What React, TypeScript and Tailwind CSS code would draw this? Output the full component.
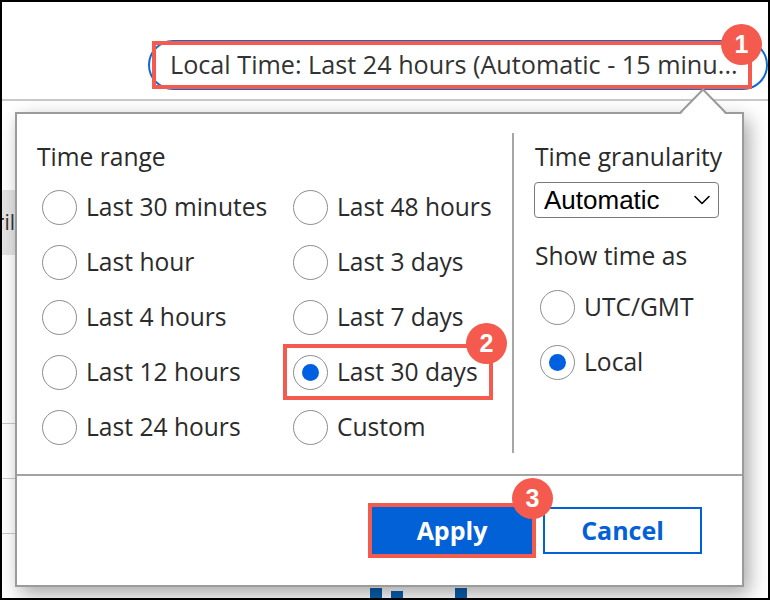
import { ChevronDown } from 'lucide-react'

const leftOptions = ['Last 30 minutes', 'Last hour', 'Last 4 hours', 'Last 12 hours', 'Last 24 hours']
const rightOptions = ['Last 48 hours', 'Last 3 days', 'Last 7 days', 'Last 30 days', 'Custom']

function Badge({ n, className }: { n: number; className: string }) {
  return (
    <span
      className={`absolute flex size-[41px] items-center justify-center rounded-full bg-[#f45b4e] font-['Liberation_Sans',Arial,sans-serif] text-[25px] font-bold text-white ${className}`}
    >
      {n}
    </span>
  )
}

function Radio({ label, checked, marked }: { label: string; checked?: boolean; marked?: boolean }) {
  return (
    <label
      className={`relative flex h-[48px] items-center gap-[9px] pl-[6px] ${marked ? 'w-[202px] outline-4 outline-[#f45b4e]' : 'w-fit pr-[7px]'}`}
    >
      <span className="flex size-[35px] shrink-0 items-center justify-center rounded-full border-[1.5px] border-[#8d8d8d] bg-white">
        {checked && <span className="size-[17px] rounded-full bg-[#0060df]" />}
      </span>
      <span className="whitespace-nowrap text-[24.6px] leading-none text-[#2b2b2b]">{label}</span>
      {marked && <Badge n={2} className="right-[-18px] top-[-25px]" />}
    </label>
  )
}

export default function App() {
  return (
    <div className="relative h-[600px] w-[770px] overflow-hidden border-2 border-black bg-white font-['Open_Sans','Noto_Sans',sans-serif]">
      {/* header with the time picker pill */}
      <div className="h-[99px] border-b-2 border-[#c9c9c9] pl-[146px] pt-[38px]">
        <button className="flex h-[50px] w-[620px] items-center rounded-full border-2 border-[#0a6cd0] pl-[6px]">
          <span className="relative flex h-[40px] w-[592px] items-center whitespace-nowrap pl-[14px] text-[25.2px] leading-none text-[#333] outline-4 outline-[#f45b4e]">
            Local Time: Last 24 hours (Automatic - 15 minu...
            <Badge n={1} className="left-[565px] top-[-21px]" />
          </span>
        </button>
      </div>

      {/* page behind the flyout */}
      <div className="flex h-[497px]">
        <div className="flex w-[13px] flex-col">
          <div className="mt-[89px] flex h-[65px] items-center justify-end overflow-hidden bg-[#e4e4e4] text-[21px] text-[#333]">
            April
          </div>
          <div className="mt-[168px] h-[55px] border-t border-[#c8c8c8]" />
          <div className="h-[55px] border-t border-[#c8c8c8]" />
          <div className="h-[55px] border-t border-[#c8c8c8]" />
        </div>
        <div className="flex flex-1 items-end pl-[355px]">
          <div className="h-[10px] w-[12px] bg-[#0a5fae]" />
          <div className="ml-[9px] h-[7px] w-[12px] bg-[#0a5fae]" />
          <div className="ml-[52px] h-[10px] w-[12px] bg-[#0a5fae]" />
        </div>
      </div>

      {/* flyout */}
      <div className="absolute left-[13px] top-[110px] flex h-[475px] w-[729px] flex-col border-2 border-[#9b9b9b] bg-white shadow-[5px_7px_18px_rgba(0,0,0,0.35)]">
        <svg className="absolute left-[663px] top-[-26px]" width="46" height="27" viewBox="0 0 46 27">
          <polygon points="0,27 23,1 46,27" fill="white" />
          <polyline points="0,25 23,1.5 46,25" fill="none" stroke="#9b9b9b" strokeWidth="2" />
        </svg>

        <div className="flex h-[362px] border-b-2 border-[#a3a3a3]">
          <div className="w-[495px] pl-[19px] pt-[28px]">
            <div className="ml-[1px] text-[24.6px] leading-[30px] text-[#2b2b2b]">Time range</div>
            <div className="mt-[11px] grid grid-cols-[251px_auto]">
              <div className="flex flex-col gap-[7px]">
                {leftOptions.map(o => (
                  <Radio key={o} label={o} />
                ))}
              </div>
              <div className="flex flex-col gap-[7px]">
                {rightOptions.map(o => (
                  <Radio key={o} label={o} checked={o === 'Last 30 days'} marked={o === 'Last 30 days'} />
                ))}
              </div>
            </div>
          </div>

          <div className="mb-[21px] mt-[19px] w-[2px] bg-[#a6a6a6]" />

          <div className="flex-1 pl-[20px] pt-[28px]">
            <div className="ml-[1px] whitespace-nowrap text-[24.6px] leading-[30px] text-[#2b2b2b]">Time granularity</div>
            <div className="mt-[10px] flex h-[36px] w-[185px] items-center justify-between rounded-[4px] border-[1.5px] border-[#7a7a7a] pl-[9px] pr-[2px] font-['Liberation_Sans',Arial,sans-serif] text-[26px] text-black">
              Automatic
              <ChevronDown size={28} strokeWidth={1.4} />
            </div>
            <div className="ml-[1px] mt-[23px] text-[24.6px] leading-[30px] text-[#2b2b2b]">Show time as</div>
            <div className="mt-[12px] flex flex-col gap-[7px]">
              <Radio label="UTC/GMT" />
              <Radio label="Local" checked />
            </div>
          </div>
        </div>

        <div className="flex flex-1 items-center justify-end gap-[11px] pr-[40px]">
          <button className="relative h-[47px] w-[160px] bg-[#0361d8] text-[25px] font-bold text-white outline-4 outline-[#f45b4e]">
            Apply
            <Badge n={3} className="left-[140px] top-[-29px]" />
          </button>
          <button className="h-[47px] w-[159px] border-2 border-[#0361d8] bg-white text-[25px] font-bold text-[#0361d8]">
            Cancel
          </button>
        </div>
      </div>
    </div>
  )
}
